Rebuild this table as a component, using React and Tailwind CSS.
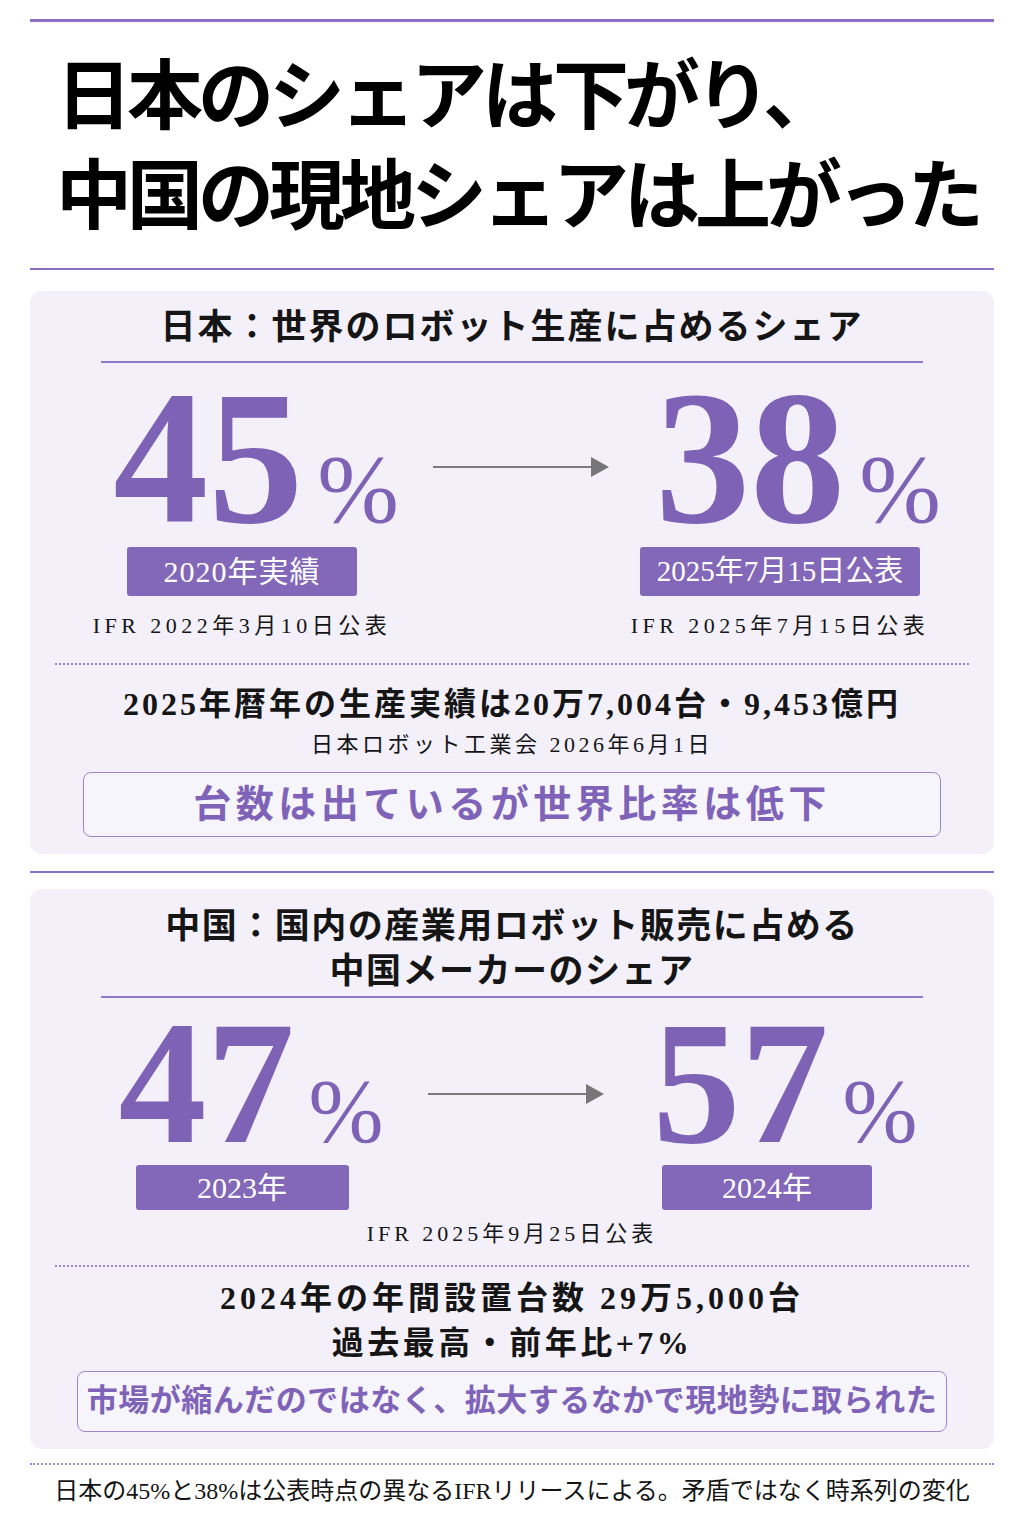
import React from 'react'

// number + % block
function Share({ value, size, pct }) {
  return (
    <div className="flex items-baseline justify-center">
      <span className={`font-bold text-[#7d62b6] ${size}`}>{value}</span>
      <span className={`ml-[14px] leading-none text-[#7d62b6] ${pct}`}>%</span>
    </div>
  )
}

function Arrow() {
  return (
    <svg width="176" height="22" viewBox="0 0 176 22">
      <line x1="0" y1="11" x2="160" y2="11" stroke="#7a7a7a" strokeWidth="2" />
      <polygon points="158,1 176,11 158,21" fill="#777" />
    </svg>
  )
}

export default function App() {
  return (
    <div className="w-[1024px] min-h-[1536px] bg-white text-[#151515] font-['Liberation_Serif','Noto_Sans_CJK_JP',serif]">
      <div className="px-[30px] pt-[19px]">
        <div className="h-[3px] bg-[#8a6fc6]" />

        <h1 className="pl-[26px] pt-[25px] text-[76px] leading-[100px] font-bold tracking-[-5px] text-black">
          <div>日本のシェアは下がり、</div>
          <div>中国の現地シェアは上がった</div>
        </h1>

        <div className="mt-[21px] h-[2px] bg-[#8a6fc6]" />

        {/* 日本 */}
        <section className="mt-[21px] rounded-[12px] bg-[#f3f0fa] pt-[13px] pb-[17px]">
          <h2 className="text-center text-[35px] leading-[48px] font-bold tracking-[2px]">
            日本：世界のロボット生産に占めるシェア
          </h2>
          <div className="mx-[71px] mt-[9px] h-[2px] bg-[#8f77c9]" />

          <div className="flex pl-[42px] pt-[20px]">
            <div className="flex w-[340px] flex-col items-center">
              <div className="leading-[150px] pl-[28px]">
                <Share value="45" size="text-[190px]" pct="text-[98px]" />
              </div>
              <div className="mt-[9px] flex h-[49px] w-[230px] items-center justify-center rounded-[3px] bg-[#8367b9] text-[30px] text-white tracking-[1px]">
                2020年実績
              </div>
              <div className="mt-[14px] text-[22px] leading-[32px] tracking-[4.5px]">IFR 2022年3月10日公表</div>
            </div>
            <div className="flex w-[218px] justify-center pt-[73px]">
              <Arrow />
            </div>
            <div className="flex w-[300px] flex-col items-center">
              <div className="leading-[150px] pl-[36px]">
                <Share value="38" size="text-[190px]" pct="text-[98px]" />
              </div>
              <div className="mt-[9px] flex h-[49px] w-[280px] items-center justify-center rounded-[3px] bg-[#8367b9] text-[29px] text-white">
                2025年7月15日公表
              </div>
              <div className="mt-[14px] text-[22px] leading-[32px] tracking-[4.5px]">IFR 2025年7月15日公表</div>
            </div>
          </div>

          <div className="mx-[25px] mt-[21px] border-t-2 border-dotted border-[#9b86d0]" />

          <p className="mt-[18px] text-center text-[32px] leading-[42px] font-bold tracking-[3px]">
            2025年暦年の生産実績は20万7,004台・9,453億円
          </p>
          <p className="mt-[5px] text-center text-[22px] leading-[30px] tracking-[3.5px]">
            日本ロボット工業会 2026年6月1日
          </p>
          <div className="mx-[53px] mt-[12px] flex h-[65px] items-center justify-center rounded-[8px] border-[1.5px] border-[#9a85cf] bg-[#f7f5fc]">
            <span className="text-[38px] font-bold tracking-[4.5px] text-[#7f63b8]">台数は出ているが世界比率は低下</span>
          </div>
        </section>

        <div className="mt-[17px] h-[2px] bg-[#8a6fc6]" />

        {/* 中国 */}
        <section className="mt-[16px] rounded-[12px] bg-[#f3f0fa] pt-[15px] pb-[17px]">
          <h2 className="text-center text-[35px] leading-[45px] font-bold tracking-[1.5px]">
            <div>中国：国内の産業用ロボット販売に占める</div>
            <div>中国メーカーのシェア</div>
          </h2>
          <div className="mx-[71px] mt-[2px] h-[2px] bg-[#8f77c9]" />

          <div className="flex pl-[42px] pt-[15px]">
            <div className="flex w-[340px] flex-col items-center">
              <div className="leading-[140px] pl-[18px]">
                <Share value="47" size="text-[176px]" pct="text-[90px]" />
              </div>
              <div className="mt-[8px] flex h-[45px] w-[213px] items-center justify-center rounded-[3px] bg-[#8367b9] text-[30px] text-white">
                2023年
              </div>
            </div>
            <div className="flex w-[218px] justify-start pl-[16px] pt-[70px]">
              <Arrow />
            </div>
            <div className="flex w-[274px] flex-col items-center">
              <div className="leading-[140px] pl-[36px]">
                <Share value="57" size="text-[176px]" pct="text-[90px]" />
              </div>
              <div className="mt-[8px] flex h-[45px] w-[210px] items-center justify-center rounded-[3px] bg-[#8367b9] text-[30px] text-white">
                2024年
              </div>
            </div>
          </div>
          <p className="mt-[8px] text-center text-[22px] leading-[32px] tracking-[4px]">IFR 2025年9月25日公表</p>

          <div className="mx-[25px] mt-[15px] border-t-2 border-dotted border-[#9b86d0]" />

          <p className="mt-[9px] text-center text-[32px] leading-[45px] font-bold tracking-[4px]">
            2024年の年間設置台数 29万5,000台
          </p>
          <p className="text-center text-[32px] leading-[45px] font-bold tracking-[3.5px]">
            過去最高・前年比+7%
          </p>
          <div className="mx-[47px] mt-[5px] flex h-[61px] items-center justify-center rounded-[8px] border-[1.5px] border-[#9a85cf] bg-[#f7f5fc]">
            <span className="text-[31px] font-bold tracking-[0.5px] text-[#7f63b8]">市場が縮んだのではなく、拡大するなかで現地勢に取られた</span>
          </div>
        </section>

        <div className="mt-[14px] border-t-2 border-dotted border-[#9b86d0]" />
        <p className="mt-[9px] text-center text-[24px] leading-[34px]">
          日本の45%と38%は公表時点の異なるIFRリリースによる。矛盾ではなく時系列の変化
        </p>
      </div>
    </div>
  )
}
